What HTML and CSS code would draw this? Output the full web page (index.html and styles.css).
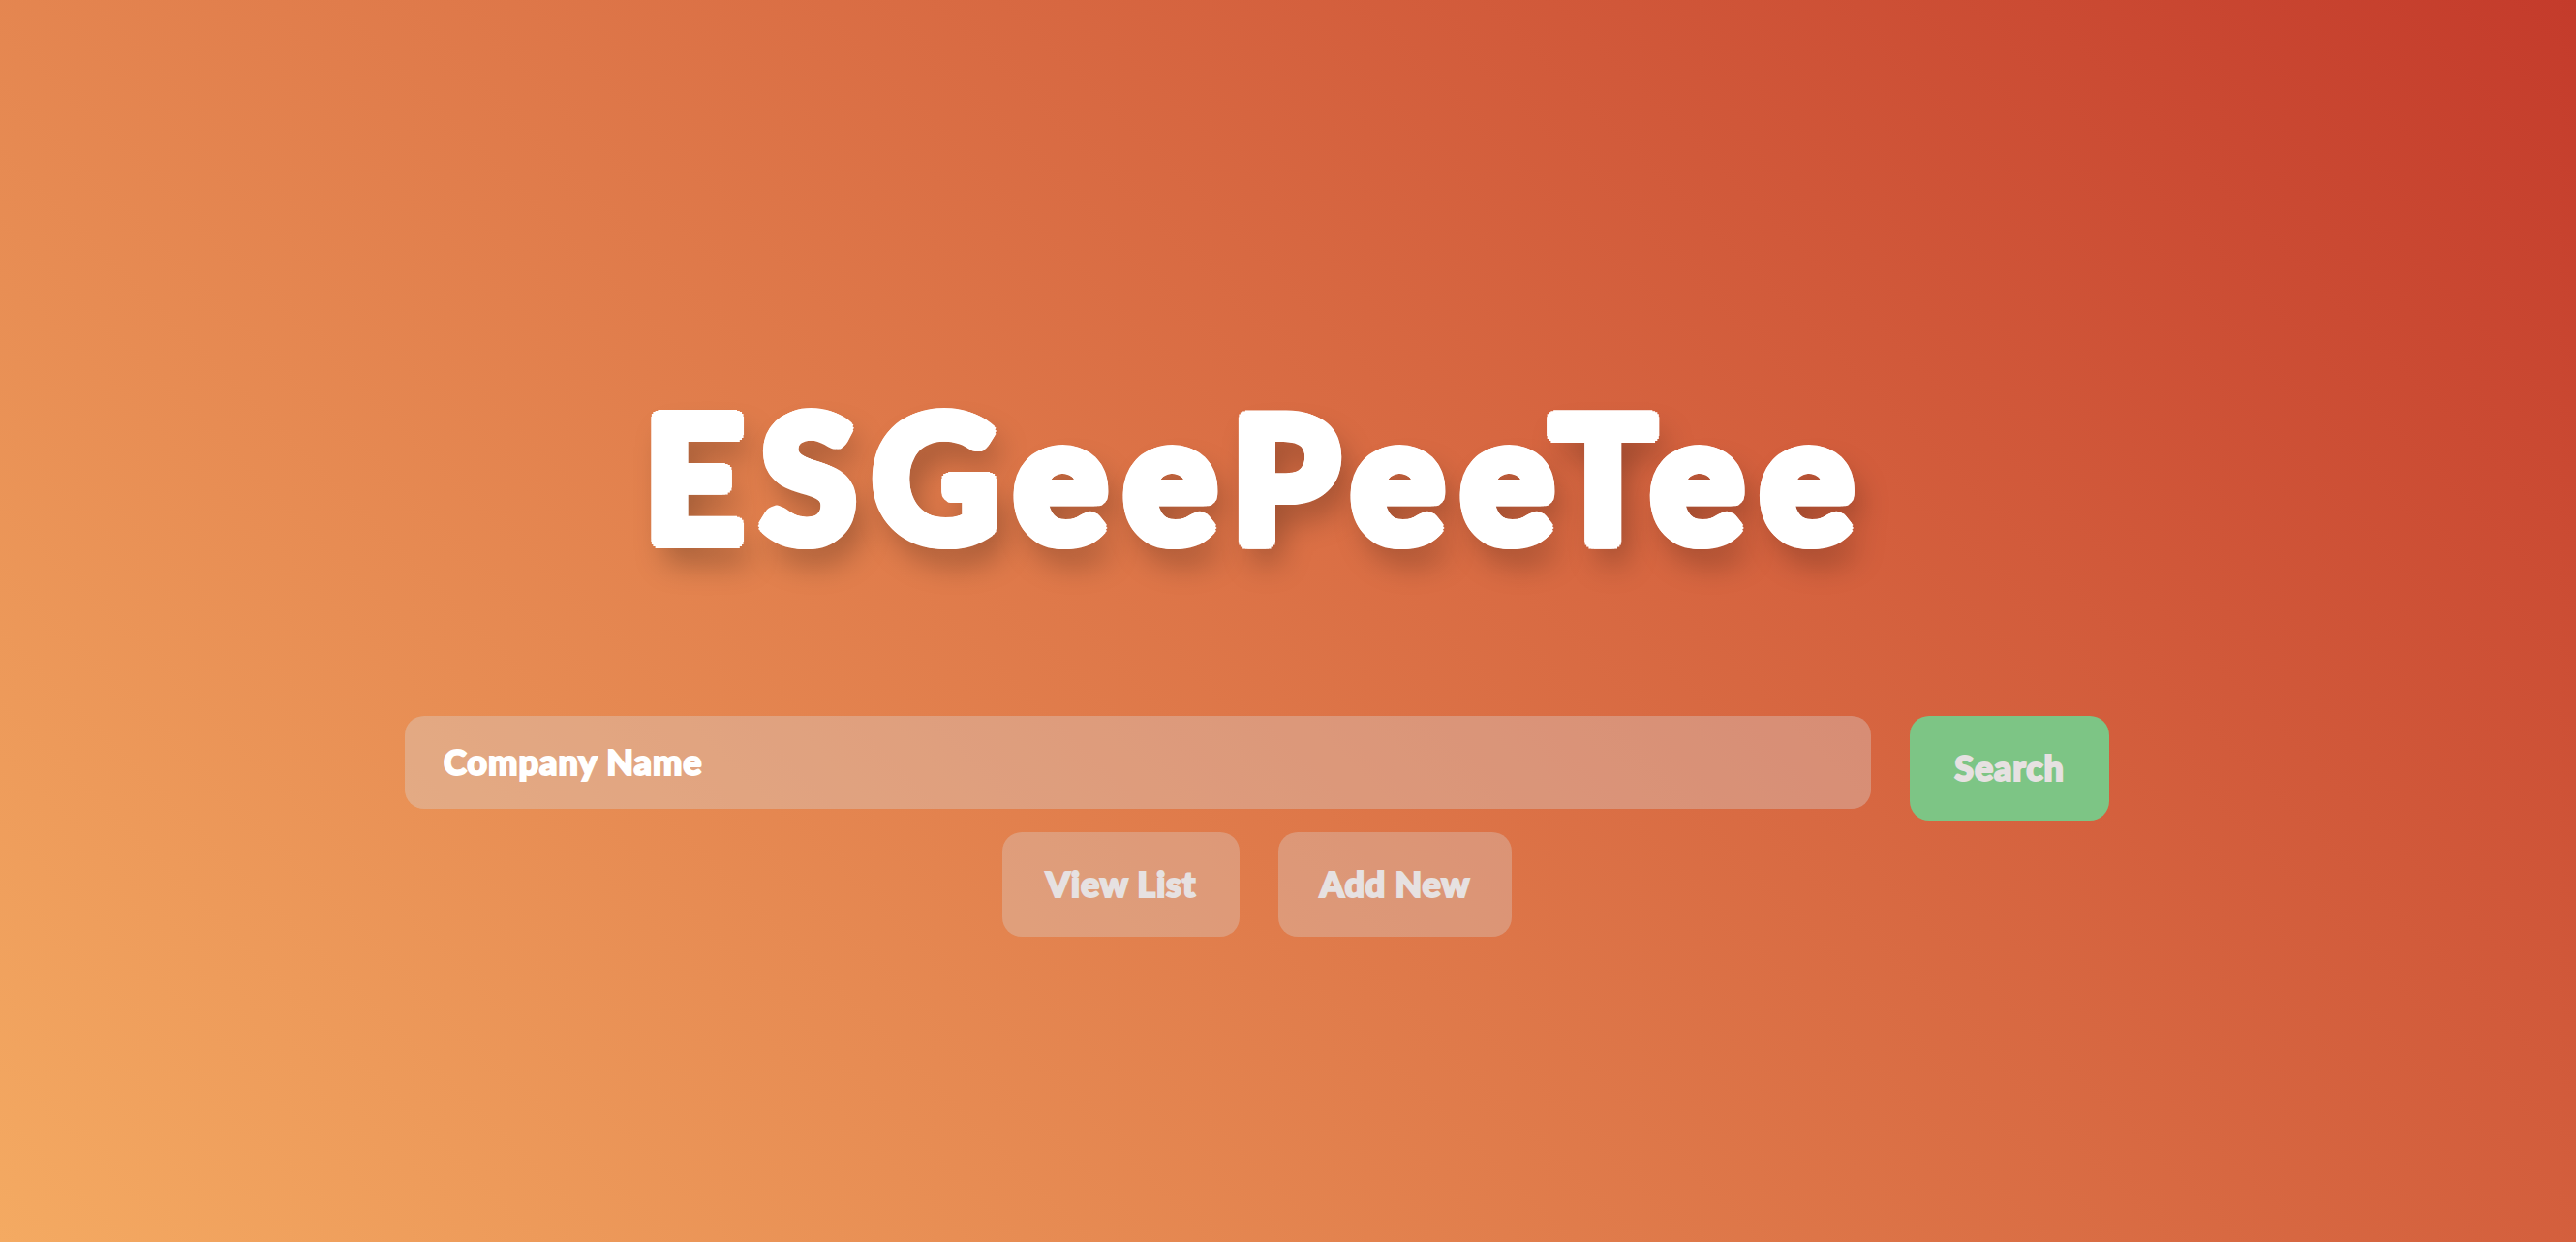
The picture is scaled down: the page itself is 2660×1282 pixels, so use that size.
FILE: index.html
```html
<!DOCTYPE html>
<html lang="en">
<head>
    <meta charset="UTF-8">
    <meta name="viewport" content="width=device-width, initial-scale=1.0">
    <title>ESGeePeeTee</title>
    <link rel="stylesheet" href="styles.css">
</head>
<body>
    <main class="container">
        <h1 class="title">ESGeePeeTee</h1>
        <div class="search-row">
            <input class="search-input" type="text" placeholder="Company Name">
            <button class="btn btn-search">Search</button>
        </div>
        <div class="action-row">
            <button class="btn btn-list">View List</button>
            <button class="btn btn-add">Add New</button>
        </div>
    </main>
</body>
</html>
```

FILE: styles.css
```css
* {
    margin: 0;
    padding: 0;
    box-sizing: border-box;
    font-family: "Lato", "Liberation Sans", sans-serif;
}

html, body {
    height: 100%;
}

body {
    overflow: hidden;
    background: linear-gradient(45deg, #f4aa62, #c43b2b);
    color: #fff;
}

.container {
    display: flex;
    flex-direction: column;
    align-items: center;
    width: 1760px;
    margin-left: 418px;
    padding-top: 390px;
}

/* the ring of white shadows rounds the corners of the letters */
.title {
    height: 349px;
    font-size: 179px;
    font-weight: 700;
    line-height: 200px;
    letter-spacing: 17.5px;
    text-shadow:
        7px 0 0 #fff, -7px 0 0 #fff, 0 7px 0 #fff, 0 -7px 0 #fff,
        5px 5px 0 #fff, -5px 5px 0 #fff, 5px -5px 0 #fff, -5px -5px 0 #fff,
        6.5px 2.7px 0 #fff, -6.5px 2.7px 0 #fff, 6.5px -2.7px 0 #fff, -6.5px -2.7px 0 #fff,
        2.7px 6.5px 0 #fff, -2.7px 6.5px 0 #fff, 2.7px -6.5px 0 #fff, -2.7px -6.5px 0 #fff,
        10px 20px 32px rgba(0, 0, 0, 0.35);
}

.search-row {
    display: flex;
    align-items: flex-start;
    gap: 40px;
    width: 100%;
}

.search-input {
    flex: 1;
    height: 96px;
    padding: 0 40px 2px;
    border: none;
    border-radius: 20px;
    background: rgba(217, 217, 217, 0.35);
    color: #fff;
    font-size: 36px;
    font-weight: 900;
    letter-spacing: 1px;
}

.search-input::placeholder {
    color: #fff;
    opacity: 1;
    -webkit-text-stroke: 2px #fff;
}

.btn {
    height: 108px;
    padding-bottom: 3px;
    border: none;
    border-radius: 20px;
    color: #e6e1e1;
    font-size: 36px;
    font-weight: 900;
    letter-spacing: 0.8px;
    -webkit-text-stroke: 2px #e6e1e1;
}

.btn-search {
    width: 206px;
    background-color: #7dc585;
}

.action-row {
    display: flex;
    gap: 40px;
    margin-top: 12px;
}

.btn-list,
.btn-add {
    background: rgba(217, 217, 217, 0.32);
}

.btn-list {
    width: 245px;
}

.btn-add {
    width: 241px;
}
```
